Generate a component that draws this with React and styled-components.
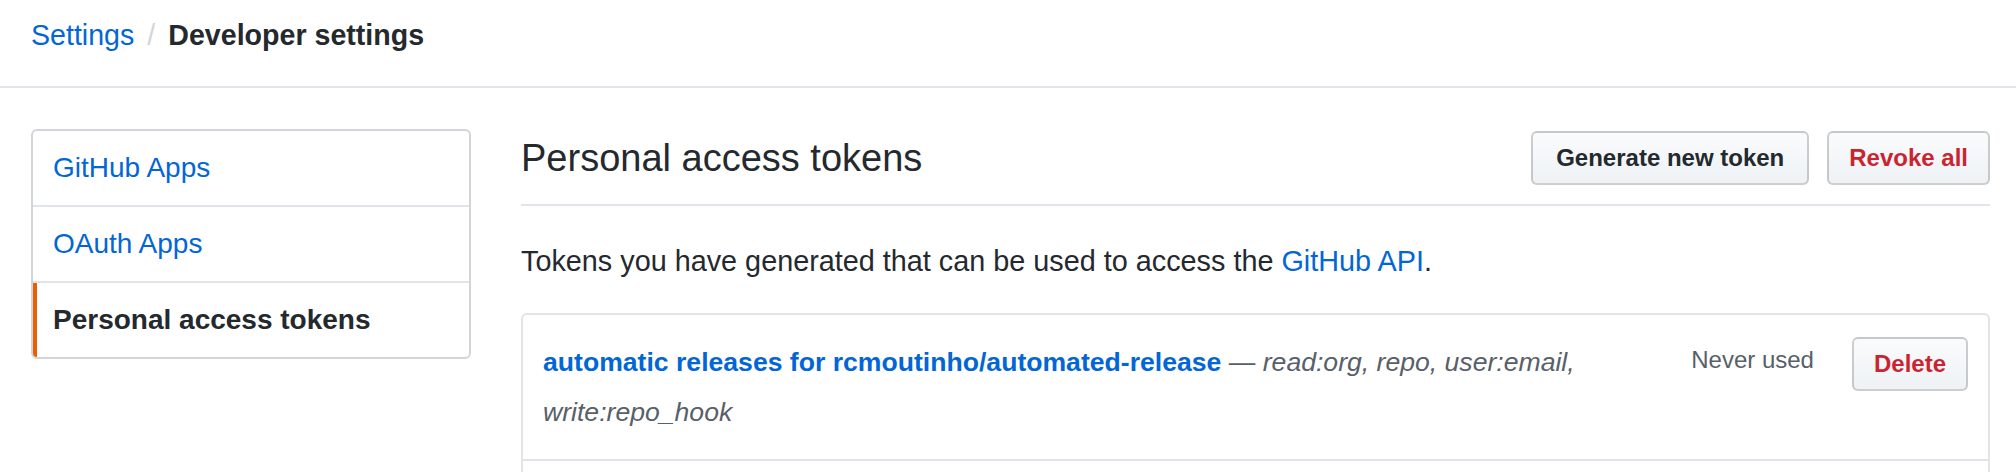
import styled, { createGlobalStyle } from "styled-components";

const GlobalStyle = createGlobalStyle`
  html, body {
    margin: 0;
    background: #fff;
    overflow: hidden;
  }
  body {
    font-family: "Liberation Sans", Arial, sans-serif;
    color: #24292e;
  }
  a {
    text-decoration: none;
  }
`;

const menuItems = [
  { label: "GitHub Apps" },
  { label: "OAuth Apps" },
  { label: "Personal access tokens", selected: true },
];

const tokens = [
  {
    name: "automatic releases for rcmoutinho/automated-release",
    scopes: "read:org, repo, user:email, write:repo_hook",
    lastUsed: "Never used",
  },
];

function App() {
  return (
    <>
      <GlobalStyle />
      <Header>
        <Crumb href="#">Settings</Crumb>
        <Separator>/</Separator>
        <Current>Developer settings</Current>
      </Header>
      <Layout>
        <Menu>
          {menuItems.map((item) => (
            <MenuItem key={item.label} href="#" $selected={item.selected}>
              {item.label}
            </MenuItem>
          ))}
        </Menu>
        <Main>
          <Subhead>
            <Heading>Personal access tokens</Heading>
            <Actions>
              <Button $wide>Generate new token</Button>
              <Button $danger>Revoke all</Button>
            </Actions>
          </Subhead>
          <Intro>
            Tokens you have generated that can be used to access the{" "}
            <Link href="#">GitHub API</Link>.
          </Intro>
          <TokenBox>
            {tokens.map((token) => (
              <TokenRow key={token.name}>
                <TokenInfo>
                  <TokenName href="#">{token.name}</TokenName> —{" "}
                  <Scopes>{token.scopes}</Scopes>
                </TokenInfo>
                <LastUsed>{token.lastUsed}</LastUsed>
                <Button $danger>Delete</Button>
              </TokenRow>
            ))}
          </TokenBox>
        </Main>
      </Layout>
    </>
  );
}

const Header = styled.header`
  display: flex;
  align-items: baseline;
  padding: 19px 31px 35px;
  font-size: 28.6px;
  line-height: 32px;
  border-bottom: 2px solid #e1e4e8;
`;

const Crumb = styled.a`
  color: #0366d6;
`;

const Separator = styled.span`
  margin: 0 13px;
  color: #d1d5da;
`;

const Current = styled.strong`
  font-weight: 700;
  color: #24292e;
`;

const Layout = styled.div`
  display: flex;
  align-items: flex-start;
  gap: 50px;
  padding: 41px 26px 0 31px;
`;

const Menu = styled.nav`
  width: 440px;
  flex-shrink: 0;
  box-sizing: border-box;
  border: 2px solid #d1d5da;
  border-radius: 6px;
  overflow: hidden;
`;

const MenuItem = styled.a`
  position: relative;
  display: flex;
  align-items: center;
  height: 74px;
  padding: 0 20px;
  font-size: 28px;
  color: ${(p) => (p.$selected ? "#24292e" : "#0366d6")};
  font-weight: ${(p) => (p.$selected ? 700 : 400)};

  & + & {
    border-top: 2px solid #e1e4e8;
  }

  &::before {
    content: "";
    display: ${(p) => (p.$selected ? "block" : "none")};
    position: absolute;
    left: 0;
    top: 0;
    bottom: 0;
    width: 4px;
    background: #e36209;
  }
`;

const Main = styled.main`
  flex: 1;
  min-width: 0;
`;

const Subhead = styled.div`
  display: flex;
  align-items: center;
  padding: 2px 0 19px;
  border-bottom: 2px solid #e1e4e8;
`;

const Heading = styled.h2`
  flex: 1;
  margin: 0;
  font-size: 38px;
  font-weight: 400;
  color: #24292e;
`;

const Actions = styled.div`
  display: flex;
  gap: 18px;
`;

const Button = styled.button`
  height: 54px;
  padding: ${(p) => (p.$wide ? "0 23px" : "0 20px")};
  font-family: "Liberation Sans", Arial, sans-serif;
  font-size: 24px;
  font-weight: 700;
  color: ${(p) => (p.$danger ? "#cb2431" : "#24292e")};
  background: linear-gradient(180deg, #fafbfc 0%, #eff3f6 90%);
  border: 2px solid rgba(27, 31, 35, 0.2);
  border-radius: 6px;
  cursor: pointer;
  white-space: nowrap;
  flex-shrink: 0;
`;

const Intro = styled.p`
  margin: 34px 0 31px;
  font-size: 28.8px;
  line-height: 42px;
  color: #24292e;
`;

const Link = styled.a`
  color: #0366d6;
`;

const TokenBox = styled.div`
  min-height: 240px;
  border: 2px solid #e1e4e8;
  border-radius: 6px;
`;

const TokenRow = styled.div`
  display: flex;
  align-items: flex-start;
  padding: 22px 20px;
  border-bottom: 2px solid #e1e4e8;
`;

const TokenInfo = styled.div`
  flex: 1;
  min-width: 0;
  font-size: 26.6px;
  line-height: 50px;
  color: #586069;
`;

const TokenName = styled.a`
  font-weight: 700;
  color: #0366d6;
`;

const Scopes = styled.em`
  font-style: italic;
  color: #586069;
`;

const LastUsed = styled.span`
  margin: 0 38px 0 30px;
  font-size: 24px;
  line-height: 46px;
  color: #586069;
  white-space: nowrap;
`;

export default App;
